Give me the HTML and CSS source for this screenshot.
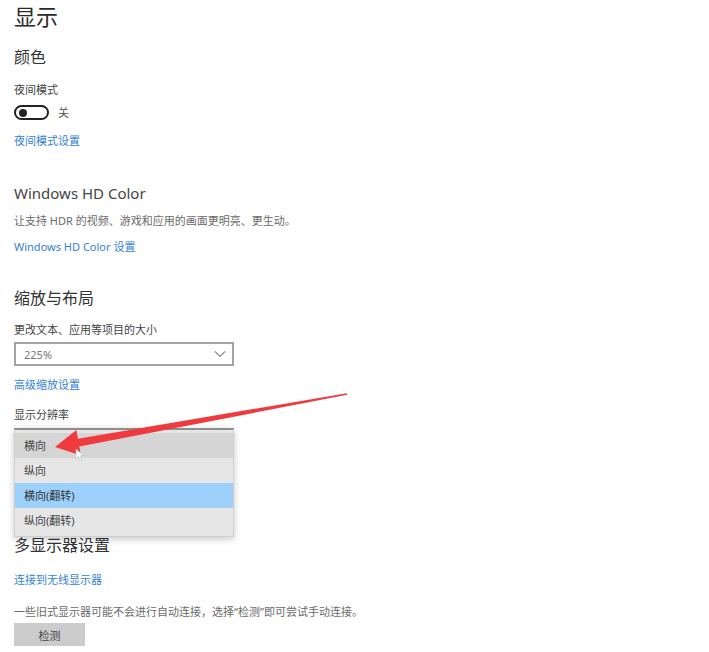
FILE: index.html
```html
<!DOCTYPE html>
<html lang="zh-CN">
<head>
    <meta charset="UTF-8">
    <title>显示</title>
    <link rel="stylesheet" href="styles.css">
</head>
<body>
    <div class="page">
        <h1 class="title">显示</h1>

        <h2 class="section section-first">颜色</h2>
        <div class="label label-night">夜间模式</div>
        <div class="toggle-row">
            <span class="toggle"><span class="knob"></span></span>
            <span class="toggle-text">关</span>
        </div>
        <a class="link link-night" href="#">夜间模式设置</a>

        <h2 class="section section-hd">Windows HD Color</h2>
        <div class="desc desc-hd">让支持 HDR 的视频、游戏和应用的画面更明亮、更生动。</div>
        <a class="link link-hd" href="#">Windows HD Color 设置</a>

        <h2 class="section section-scale">缩放与布局</h2>
        <div class="label label-size">更改文本、应用等项目的大小</div>
        <div class="select">
            <span class="select-value">225%</span>
            <svg class="chevron" width="12" height="8" viewBox="0 0 12 8"><path d="M1 1.5 L6 6.5 L11 1.5" fill="none" stroke="#8a8a8a" stroke-width="1.2"/></svg>
        </div>
        <a class="link link-scale" href="#">高级缩放设置</a>

        <div class="label label-res">显示分辨率</div>
        <ul class="dropdown">
            <li class="option hover">横向</li>
            <li class="option">纵向</li>
            <li class="option selected">横向(翻转)</li>
            <li class="option">纵向(翻转)</li>
        </ul>

        <h2 class="section section-multi">多显示器设置</h2>
        <a class="link link-wireless" href="#">连接到无线显示器</a>
        <div class="desc desc-detect">一些旧式显示器可能不会进行自动连接，选择“检测”即可尝试手动连接。</div>
        <button class="button">检测</button>
    </div>

    <svg class="arrow" width="709" height="652" viewBox="0 0 709 652">
        <polygon points="347.2,394.8 346.8,393.2 78.0,438.8 76.3,429.9 55,447 80.9,455.5 79.3,446.6" fill="#ef3a3e"/>
        <polygon points="76,449 76,459 78.5,456.5 80.5,460.5 82,459.8 80,455.8 83.5,455.5" fill="#fff" stroke="#bbb" stroke-width="0.6"/>
    </svg>
</body>
</html>
```

FILE: styles.css
```css
body {
    margin: 0;
    background-color: #fff;
    font-family: "Noto Sans", "Noto Sans CJK SC", sans-serif;
    color: #333;
}
.page {
    padding: 0 14px;
    display: flex;
    flex-direction: column;
    align-items: flex-start;
}
.title {
    margin: 0;
    padding-top: 1px;
    font-size: 22px;
    font-weight: normal;
    line-height: 30px;
    color: #2a2a2a;
}
.section {
    margin: 0;
    font-size: 16px;
    font-weight: normal;
    line-height: 20px;
    color: #333;
}
.section-first {
    margin-top: 16px;
}
.section-hd {
    margin-top: 34px;
    font-size: 15px;
    color: #444;
}
.section-scale {
    margin-top: 33px;
}
.section-multi {
    margin-top: -2px;
}
.label,
.desc {
    font-size: 11px;
    line-height: 16px;
    color: #444;
}
.desc {
    color: #6a6a6a;
}
.label-night {
    margin-top: 15px;
}
.label-size {
    margin-top: 14px;
}
.label-res {
    margin-top: 14px;
}
.desc-hd {
    margin-top: 10px;
}
.desc-detect {
    margin-top: 16px;
}
.link {
    font-size: 11px;
    line-height: 16px;
    color: #3582d6;
    text-decoration: none;
}
.link-night {
    margin-top: 13px;
}
.link-hd {
    margin-top: 10px;
}
.link-scale {
    margin-top: 11px;
}
.link-wireless {
    margin-top: 17px;
}
.toggle-row {
    margin-top: 7px;
    display: flex;
    align-items: center;
    gap: 9px;
}
.toggle {
    box-sizing: border-box;
    width: 35px;
    height: 15px;
    border: 2px solid #222;
    border-radius: 8px;
    display: flex;
    align-items: center;
    padding-left: 3px;
}
.knob {
    width: 8px;
    height: 8px;
    border-radius: 50%;
    background-color: #222;
}
.toggle-text {
    font-size: 11px;
    line-height: 15px;
    color: #555;
}
.select {
    margin-top: 4px;
    box-sizing: border-box;
    width: 220px;
    height: 24px;
    border: 2px solid #a3a3a3;
    display: flex;
    align-items: center;
    justify-content: space-between;
    padding: 0 6px 0 8px;
}
.select-value {
    font-size: 11px;
    color: #777;
}
.dropdown {
    position: relative;
    z-index: 1;
    list-style: none;
    margin: 5px 0 0;
    padding: 3px 0;
    box-sizing: border-box;
    width: 220px;
    background-color: #e6e6e6;
    border: 1px solid #cfcfcf;
    border-top: 2px solid #8e8e8e;
    box-shadow: 0 2px 7px rgba(0, 0, 0, 0.22);
}
.option {
    height: 25px;
    line-height: 25px;
    padding-left: 9px;
    font-size: 11px;
    color: #444;
}
.option.hover {
    background-color: #d5d5d5;
}
.option.selected {
    background-color: #9dd0fb;
    color: #333;
}
.button {
    margin-top: 3px;
    width: 71px;
    height: 23px;
    border: none;
    background-color: #cccccc;
    font-family: "Noto Sans CJK SC", sans-serif;
    font-size: 11px;
    color: #444;
    padding: 0;
}
.arrow {
    position: absolute;
    left: 0;
    top: 0;
    z-index: 2;
    pointer-events: none;
}
```
